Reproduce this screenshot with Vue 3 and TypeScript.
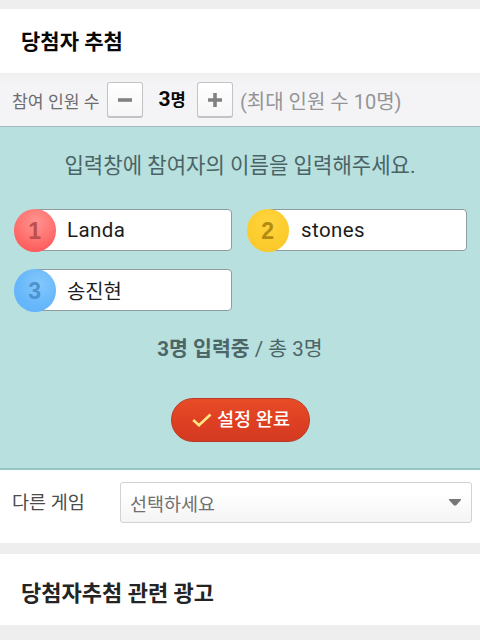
<script setup lang="ts">
import { ref, computed } from 'vue'

interface Participant {
  name: string
  tone: 'red' | 'yellow' | 'blue'
}

const maxCount = 10
const participants = ref<Participant[]>([
  { name: 'Landa', tone: 'red' },
  { name: 'stones', tone: 'yellow' },
  { name: '송진현', tone: 'blue' },
])
const total = computed(() => participants.value.length)
const filled = computed(() => participants.value.filter((p) => p.name).length)
const tones: Participant['tone'][] = ['red', 'yellow', 'blue']

function add() {
  if (total.value < maxCount) participants.value.push({ name: '', tone: tones[total.value % 3] })
}
function remove() {
  if (total.value > 1) participants.value.pop()
}
</script>

<template>
  <main class="page">
    <header class="heading"><h1>당첨자 추첨</h1></header>

    <section class="counter">
      <span class="counter-label">참여 인원 수</span>
      <button class="step" type="button" aria-label="-" @click="remove">
        <svg width="16" height="16" viewBox="0 0 16 16"><path d="M1 8H15" /></svg>
      </button>
      <strong class="count">{{ total }}<span>명</span></strong>
      <button class="step" type="button" aria-label="+" @click="add">
        <svg width="16" height="16" viewBox="0 0 16 16"><path d="M1 8H15M8 1V15" /></svg>
      </button>
      <span class="limit">(최대 인원 수 {{ maxCount }}명)</span>
    </section>

    <section class="entry">
      <p class="guide">입력창에 참여자의 이름을 입력해주세요.</p>
      <div class="fields">
        <label v-for="(p, i) in participants" :key="i" class="field">
          <span class="ball" :class="p.tone">{{ i + 1 }}</span>
          <input v-model="p.name" type="text" />
        </label>
      </div>
      <p class="status"><b>{{ filled }}명 입력중</b> / 총 {{ total }}명</p>
      <button class="submit" type="button">
        <svg width="20" height="16" viewBox="0 0 20 16"><path d="M1.2 8L7 13.2L18.5 2.5" /></svg>
        <span>설정 완료</span>
      </button>
    </section>

    <section class="other">
      <span class="other-label">다른 게임</span>
      <div class="select">
        <span>선택하세요</span>
        <svg width="12" height="7" viewBox="0 0 12 7"><path d="M0 0H12V1L7 6.5H5L0 1Z" /></svg>
      </div>
    </section>

    <section class="related"><h2>당첨자추첨 관련 광고</h2></section>
  </main>
</template>

<style>
body {
  margin: 0;
  background: #eeeeef;
}
</style>

<style scoped>
.page {
  box-sizing: border-box;
  width: 480px;
  height: 640px;
  padding-top: 9px;
  overflow: hidden;
  background: #eeeeef;
  font-family: Roboto, 'Noto Sans CJK KR', sans-serif;
}
h1,
h2,
p {
  margin: 0;
  white-space: nowrap;
}
button {
  padding: 0;
  font-family: inherit;
}
.heading {
  box-sizing: border-box;
  height: 64px;
  padding: 2px 0 0 21px;
  display: flex;
  align-items: center;
  background: #fff;
}
h1 {
  font-size: 21px;
  line-height: 30px;
  font-weight: 700;
  color: #080808;
}
.counter {
  box-sizing: border-box;
  height: 54px;
  padding: 1px 0 0 12px;
  display: flex;
  align-items: center;
  background: linear-gradient(#f0f0f1, #f4f4f6 20%);
  border-bottom: 1px solid #a3babf;
  white-space: nowrap;
}
.counter-label {
  width: 95px;
  font-size: 17.2px;
  color: #6d6d6f;
}
.step {
  box-sizing: border-box;
  width: 36px;
  height: 36px;
  border: 1px solid #c3c3c5;
  border-bottom-width: 2px;
  border-radius: 3px;
  background: linear-gradient(#fff, #f6f6f7);
  display: grid;
  place-items: center;
}
.step path {
  fill: none;
  stroke: #818181;
  stroke-width: 3.6;
}
.count {
  box-sizing: border-box;
  width: 54px;
  padding-left: 4px;
  text-align: center;
  font-size: 21px;
  line-height: 28px;
  font-weight: 700;
  color: #080808;
}
.count span {
  font-size: 16.5px;
}
.limit {
  margin-left: 7px;
  font-size: 20px;
  color: #949496;
}
.entry {
  box-sizing: border-box;
  height: 343px;
  padding: 22px 13px 0;
  display: flex;
  flex-direction: column;
  align-items: center;
  background: #b8e0df;
  border-bottom: 2px solid #99c5c3;
}
.guide {
  font-size: 21.1px;
  line-height: 34px;
  color: #4a6465;
}
.fields {
  align-self: stretch;
  margin-top: 25px;
  display: grid;
  grid-template-columns: 219px 221px;
  column-gap: 14px;
  row-gap: 16px;
}
.field {
  display: flex;
  align-items: center;
  height: 44px;
}
.field:nth-child(even) input {
  padding-left: 33px;
}
.ball {
  box-sizing: border-box;
  position: relative;
  flex: none;
  width: 42.5px;
  height: 43px;
  margin-left: 0.8px;
  padding-right: 1px;
  border-radius: 50%;
  display: grid;
  place-items: center;
  font: 700 23px/45px 'Liberation Sans', sans-serif;
}
.red {
  color: #bd4f4d;
  background: radial-gradient(circle at 52% 30%, #ff9490, #ff7673 45%, #fc5b5a 80%);
}
.yellow {
  color: #b28b12;
  background: radial-gradient(circle at 50% 30%, #fed53e, #fdcc2e 55%, #f8c529);
}
.blue {
  color: #4c93d0;
  background: radial-gradient(circle at 60% 35%, #85c8fb, #6ab9fb 50%, #5dafff);
}
input {
  box-sizing: border-box;
  flex: 1;
  min-width: 0;
  height: 42px;
  margin-left: -22.3px;
  padding: 0 8px 0 32px;
  border: 1px solid #8e9c9f;
  border-radius: 4px;
  background: #fff;
  color: #1c1c1c;
  font-family: inherit;
  font-size: 20.5px;
  letter-spacing: 0.4px;
  outline: none;
}
.field:nth-child(3) input {
  font-size: 19.9px;
  letter-spacing: 0;
}
.status {
  margin-top: 20px;
  font-size: 20.5px;
  line-height: 34px;
  color: #4c6667;
}
.submit {
  box-sizing: border-box;
  width: 139px;
  height: 44px;
  margin-top: 32px;
  padding: 0 0 0 2px;
  border: 1px solid #bd3925;
  border-radius: 22px;
  background: linear-gradient(#e74c27, #df4023 50%, #d33a20);
  display: flex;
  align-items: center;
  justify-content: center;
  gap: 5px;
  color: #fff;
  font-size: 18.6px;
  line-height: 28px;
  font-weight: 500;
  white-space: nowrap;
}
.submit path {
  fill: none;
  stroke: #ffe883;
  stroke-width: 2.6;
}
.other {
  box-sizing: border-box;
  height: 73px;
  padding: 12px 8px 0 12px;
  display: flex;
  background: #fff;
}
.other-label {
  width: 108px;
  line-height: 43px;
  font-size: 18.5px;
  color: #4b4b4b;
}
.select {
  box-sizing: border-box;
  flex: 1;
  height: 41px;
  padding: 0 10px 0 9px;
  border: 1px solid #d2d2d2;
  border-radius: 3px;
  display: flex;
  align-items: center;
  justify-content: space-between;
  background: linear-gradient(#fff 25%, #f4f4f4);
  font-size: 18.5px;
  color: #707070;
}
.select path {
  fill: #777;
}
.related {
  box-sizing: border-box;
  height: 71px;
  margin-top: 11px;
  padding: 8px 0 0 21px;
  display: flex;
  align-items: center;
  background: #fff;
}
h2 {
  font-size: 22px;
  line-height: 30px;
  font-weight: 700;
  color: #242424;
}
</style>
